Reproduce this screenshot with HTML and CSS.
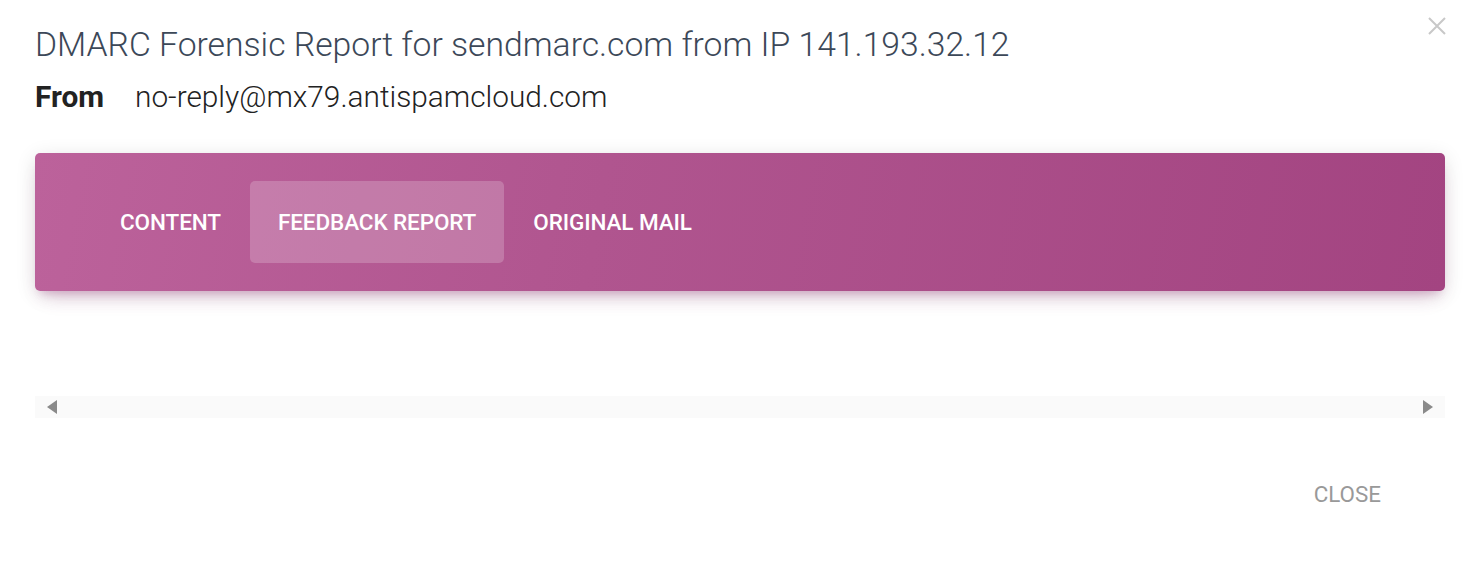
FILE: index.html
```html
<!DOCTYPE html>
<html>
<head>
<meta charset="utf-8">
<link rel="stylesheet" href="styles.css">
</head>
<body>
<div class="modal">
  <button class="x-btn" aria-label="close">
    <svg width="20" height="20" viewBox="0 0 20 20"><path d="M2 2 L18 18 M18 2 L2 18" stroke="#c8c8c8" stroke-width="2" fill="none"/></svg>
  </button>
  <h1 class="title">DMARC Forensic Report for sendmarc.com from IP 141.193.32.12</h1>
  <div class="from"><span class="from-label">From</span><span class="from-value">no-reply@mx79.antispamcloud.com</span></div>
  <div class="tabbar">
    <div class="tab">CONTENT</div>
    <div class="tab active">FEEDBACK REPORT</div>
    <div class="tab">ORIGINAL MAIL</div>
  </div>
  <div class="scroller">
    <span class="arrow left"></span>
    <span class="arrow right"></span>
  </div>
  <div class="footer">
    <button class="close-btn">CLOSE</button>
  </div>
</div>
</body>
</html>
```
FILE: styles.css
```css
* { box-sizing: border-box; }
html, body { margin: 0; padding: 0; background: #fff; }
body { font-family: Roboto, "Noto Sans", sans-serif; }
.modal { position: relative; padding: 23px 27px 0 35px; height: 571px; }
.x-btn { position: absolute; top: 16px; right: 25px; background: none; border: 0; padding: 0; width: 20px; height: 20px; }
.title { margin: 0; font-weight: 300; font-size: 33.7px; line-height: 44px; color: #3c4858; }
.from { margin-top: 12px; display: flex; align-items: baseline; font-size: 29.8px; line-height: 36px; color: #222; }
.from-label { font-weight: 700; width: 100px; }
.from-value { font-weight: 300; }
.tabbar { margin-top: 38px; height: 138px; border-radius: 5px; display: flex; align-items: center; padding-left: 57px; gap: 1px;
  background: linear-gradient(100deg, #bc629b 0%, #b0558f 40%, #a34481 100%);
  box-shadow: 0 12px 20px -10px rgba(156, 39, 120, 0.28), 0 4px 20px 0 rgba(0, 0, 0, 0.12), 0 7px 8px -5px rgba(156, 39, 120, 0.2); }
.tab { height: 82px; display: flex; align-items: center; padding: 0 28px; color: #fff; font-weight: 500; font-size: 22.5px; letter-spacing: -0.1px; border-radius: 5px; }
.tab.active { background: rgba(255, 255, 255, 0.2); }
.scroller { margin-top: 105px; height: 22px; background: #fafafa; display: flex; justify-content: space-between; align-items: center; padding: 0 12px 0 12px; }
.arrow { width: 0; height: 0; border-top: 7px solid transparent; border-bottom: 7px solid transparent; }
.arrow.left { border-right: 10px solid #8a8a8a; }
.arrow.right { border-left: 10px solid #8a8a8a; }
.footer { display: flex; justify-content: flex-end; margin-top: 63px; padding-right: 64px; }
.close-btn { background: none; border: 0; padding: 0; font-family: Roboto, sans-serif; font-size: 22.4px; line-height: 26px; font-weight: 400; color: #999; }
```
